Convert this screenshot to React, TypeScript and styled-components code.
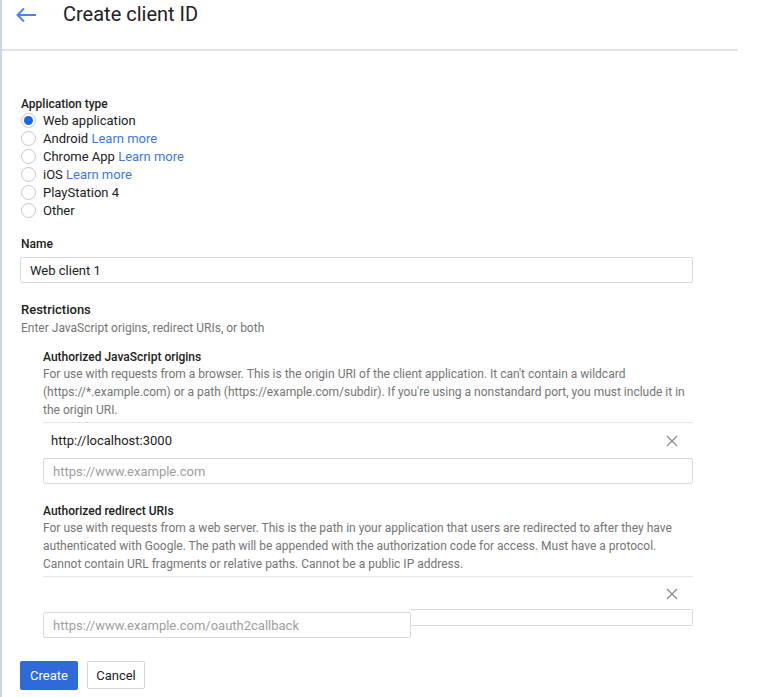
import React from 'react';
import styled, { createGlobalStyle } from 'styled-components';

const GlobalStyle = createGlobalStyle`
  html, body {
    margin: 0;
    padding: 0;
    background: #ffffff;
  }
  body {
    font-family: Roboto, 'Liberation Sans', Arial, sans-serif;
    color: #212121;
  }
`;

const APP_TYPES = [
  { label: 'Web application', learn: false, checked: true },
  { label: 'Android', learn: true },
  { label: 'Chrome App', learn: true },
  { label: 'iOS', learn: true },
  { label: 'PlayStation 4', learn: false },
  { label: 'Other', learn: false },
];

const BackArrow = () => (
  <svg width="22" height="16" viewBox="0 0 22 16" fill="none">
    <path d="M21 8H2.5M9 1.5L2.5 8L9 14.5" stroke="#4285f4" strokeWidth="2" />
  </svg>
);

const CloseIcon = () => (
  <svg width="12" height="12" viewBox="0 0 12 12" fill="none">
    <path d="M1 1L11 11M11 1L1 11" stroke="#8a8a8a" strokeWidth="1.3" />
  </svg>
);

const App = () => {
  return (
    <>
      <GlobalStyle />
      <PageWrapper>
        <Header>
          <BackButton>
            <BackArrow />
          </BackButton>
          <Title>Create client ID</Title>
        </Header>

        <Content>
          <FieldLabel $top={45}>Application type</FieldLabel>
          <RadioList>
            {APP_TYPES.map((t) => (
              <RadioRow key={t.label}>
                <Radio $checked={!!t.checked} />
                <span>
                  {t.label}
                  {t.learn && <LearnLink> Learn more</LearnLink>}
                </span>
              </RadioRow>
            ))}
          </RadioList>

          <FieldLabel $top={17}>Name</FieldLabel>
          <NameInput defaultValue="Web client 1" />

          <SectionTitle>Restrictions</SectionTitle>
          <SectionHint>Enter JavaScript origins, redirect URIs, or both</SectionHint>

          <RestrictBlock $top={12}>
            <RestrictTitle>Authorized JavaScript origins</RestrictTitle>
            <RestrictDesc>
              For use with requests from a browser. This is the origin URI of the client
              application. It can't contain a wildcard (https://*.example.com) or a path
              (https://example.com/subdir). If you're using a nonstandard port, you must
              include it in the origin URI.
            </RestrictDesc>
            <Divider />
            <UriRow $height={35}>
              <span>http://localhost:3000</span>
              <CloseIcon />
            </UriRow>
            <UriInput placeholder="https://www.example.com" />
          </RestrictBlock>

          <RestrictBlock $top={19}>
            <RestrictTitle>Authorized redirect URIs</RestrictTitle>
            <RestrictDesc>
              For use with requests from a web server. This is the path in your application
              that users are redirected to after they have authenticated with Google. The
              path will be appended with the authorization code for access. Must have a
              protocol. Cannot contain URL fragments or relative paths. Cannot be a public IP
              address.
            </RestrictDesc>
            <Divider />
            <UriRow $height={33}>
              <span />
              <CloseIcon />
            </UriRow>
            <SplitRow>
              <UriInput $width={368} placeholder="https://www.example.com/oauth2callback" />
              <InputFragment />
            </SplitRow>
          </RestrictBlock>

          <ActionBar>
            <PrimaryButton>Create</PrimaryButton>
            <SecondaryButton>Cancel</SecondaryButton>
          </ActionBar>
        </Content>
      </PageWrapper>
    </>
  );
};

export default App;

const PageWrapper = styled.div`
  width: 760px;
  min-height: 697px;
  border-left: 2px solid #cdd6e4;
  background: #ffffff;
`;

const Header = styled.header`
  width: 736px;
  height: 51px;
  display: flex;
  align-items: flex-start;
  padding-left: 13px;
  box-sizing: border-box;
  border-bottom: 2px solid #e4e4e4;
`;

const BackButton = styled.div`
  width: 48px;
  height: 30px;
  display: flex;
  align-items: center;
`;

const Title = styled.h1`
  margin: 0;
  padding-top: 2px;
  font-size: 20px;
  line-height: 24px;
  font-weight: 400;
  color: #212121;
`;

const Content = styled.main`
  padding-left: 19px;
  padding-bottom: 8px;
`;

const FieldLabel = styled.div<{ $top: number }>`
  margin-top: ${(p) => p.$top}px;
  font-size: 12px;
  line-height: 16px;
  font-weight: 500;
  color: #212121;
`;

const RadioList = styled.div`
  display: flex;
  flex-direction: column;
  margin-top: -1px;
`;

const RadioRow = styled.label`
  height: 18px;
  display: flex;
  align-items: center;
  gap: 7px;
  font-size: 13px;
  color: #212121;
`;

const Radio = styled.span<{ $checked: boolean }>`
  width: 15px;
  height: 15px;
  box-sizing: border-box;
  border-radius: 50%;
  border: 1px solid #c8c8c8;
  background: #fff;
  display: flex;
  align-items: center;
  justify-content: center;
  &::after {
    content: '';
    width: 9px;
    height: 9px;
    border-radius: 50%;
    background: ${(p) => (p.$checked ? '#1a66e6' : 'transparent')};
  }
`;

const LearnLink = styled.a`
  color: #3b78e7;
  cursor: pointer;
`;

const NameInput = styled.input`
  display: block;
  margin: 5px 0 0 -1px;
  width: 673px;
  height: 26px;
  box-sizing: border-box;
  border: 1px solid #d9d9d9;
  border-radius: 2px;
  padding: 0 9px;
  font-family: inherit;
  font-size: 13px;
  color: #212121;
  outline: none;
`;

const SectionTitle = styled.div`
  margin-top: 18px;
  font-size: 13px;
  line-height: 18px;
  font-weight: 500;
`;

const SectionHint = styled.div`
  font-size: 12px;
  line-height: 18px;
  color: #757575;
`;

const RestrictBlock = styled.section<{ $top: number }>`
  margin: ${(p) => p.$top}px 0 0 22px;
  width: 650px;
`;

const RestrictTitle = styled.div`
  font-size: 12px;
  line-height: 16px;
  font-weight: 500;
`;

const RestrictDesc = styled.p`
  margin: 0;
  font-size: 12px;
  line-height: 18px;
  color: #757575;
`;

const Divider = styled.hr`
  margin: 3px 0 0;
  border: 0;
  height: 1px;
  background: #e6e6e6;
`;

const UriRow = styled.div<{ $height: number }>`
  height: ${(p) => p.$height}px;
  display: flex;
  align-items: center;
  justify-content: space-between;
  padding: 0 15px 0 8px;
  font-size: 13px;
  color: #212121;
`;

const UriInput = styled.input<{ $width?: number }>`
  display: block;
  width: ${(p) => (p.$width ? `${p.$width}px` : '100%')};
  height: 26px;
  box-sizing: border-box;
  border: 1px solid #d9d9d9;
  border-radius: 2px;
  padding: 0 9px;
  font-family: inherit;
  font-size: 13px;
  color: #212121;
  outline: none;
  &::placeholder {
    color: #9e9e9e;
  }
`;

const SplitRow = styled.div`
  display: flex;
  align-items: flex-start;
  margin-top: 2px;
`;

const InputFragment = styled.div`
  flex: 1;
  height: 17px;
  margin-top: -3px;
  box-sizing: border-box;
  border: 1px solid #d9d9d9;
  border-left: 0;
  border-radius: 0 2px 2px 0;
`;

const ActionBar = styled.div`
  display: flex;
  gap: 9px;
  margin: 23px 0 0 -1px;
`;

const PrimaryButton = styled.button`
  width: 58px;
  height: 29px;
  border: 0;
  border-radius: 2px;
  background: #2f6bd8;
  color: #ffffff;
  font-family: inherit;
  font-size: 13px;
  cursor: pointer;
`;

const SecondaryButton = styled.button`
  width: 58px;
  height: 28px;
  border: 1px solid #d6d6d6;
  border-radius: 2px;
  background: #ffffff;
  color: #212121;
  font-family: inherit;
  font-size: 13px;
  cursor: pointer;
`;
